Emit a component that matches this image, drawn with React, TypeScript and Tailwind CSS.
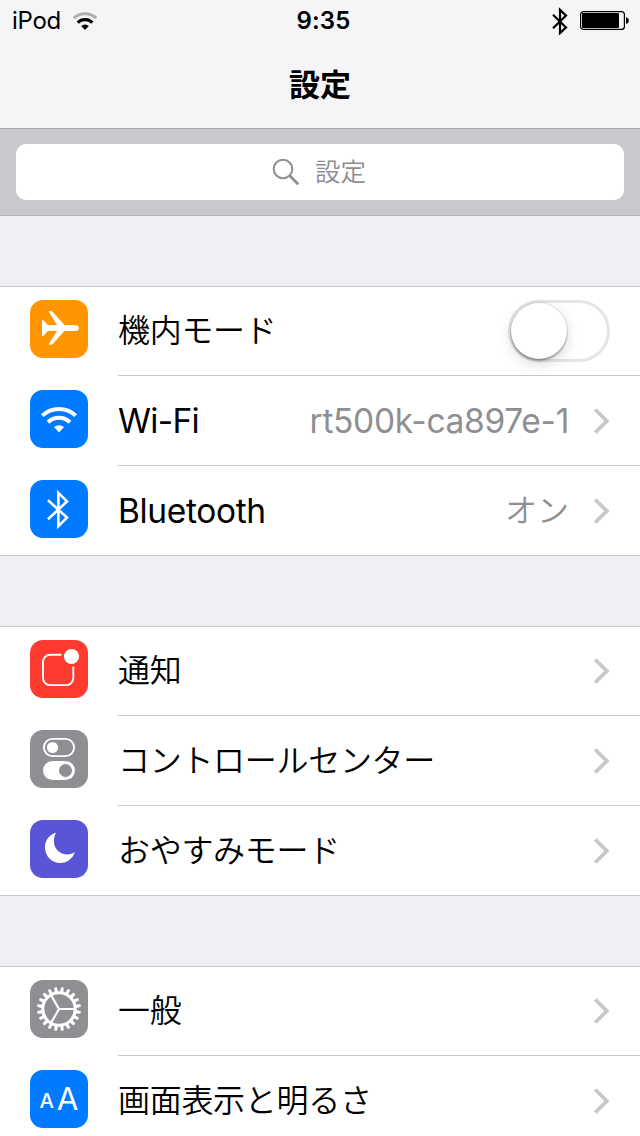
import type { ReactNode } from "react";
import { clsx } from "clsx";

type RowProps = {
  icon: ReactNode;
  iconClassName: string;
  label: string;
  labelClassName?: string;
  last?: boolean;
  children?: ReactNode;
};

function Row({
  icon,
  iconClassName,
  label,
  labelClassName = "font-[350] tracking-[-0.3px]",
  last,
  children,
}: RowProps) {
  return (
    <div className="flex h-[90px] pl-[30px]">
      <div
        className={clsx(
          "mt-[14px] size-[58px] shrink-0 overflow-hidden rounded-[13px]",
          iconClassName,
        )}
      >
        {icon}
      </div>
      <div
        className={clsx(
          "ml-[30px] flex flex-1 items-center border-b pr-[30px]",
          last ? "border-transparent" : "border-[#c8c7cc]",
        )}
      >
        <span className={clsx("flex-1 whitespace-nowrap", labelClassName)}>
          {label}
        </span>
        {children}
      </div>
    </div>
  );
}

function Group({ children }: { children: ReactNode }) {
  return (
    <section className="mb-[70px] bg-white shadow-[inset_0_1px_0_#c8c7cc,inset_0_-1px_0_#c8c7cc]">
      {children}
    </section>
  );
}

function Chevron() {
  return (
    <svg width="18" height="28" viewBox="0 0 18 28" className="ml-[23px]">
      <path
        d="M3.200 2.500 14.800 14 3.200 25.500"
        fill="none"
        stroke="#c7c7cc"
        strokeWidth="3.800"
      />
    </svg>
  );
}

function Switch() {
  return (
    <div className="mt-px h-[62px] w-[102px] rounded-full border-[3px] border-[#e5e5e5]">
      <div className="size-14 rounded-full bg-white shadow-[0_0_0_1px_rgba(0,0,0,0.08),0_2px_2px_rgba(0,0,0,0.3),0_5px_14px_rgba(0,0,0,0.15)]" />
    </div>
  );
}

function AirplaneIcon() {
  return (
    <svg viewBox="0 0 58 58" fill="#fff">
      <path d="M12 20.200h1.400l4.300 4.900h9.300L19 12.300c-.4-.8-.2-1.300.6-1.300h2.200L34.500 25l11.500.2c4 .1 3.900 5.600 0 5.700L34.500 31 21.900 44.800h-2.300c-.8 0-1-.5-.6-1.300L27 31h-9.300l-4.300 4.900H12z" />
    </svg>
  );
}

function WifiIcon() {
  return (
    <svg viewBox="0 0 58 58" fill="none" stroke="#fff">
      <path d="M12.300 25.600a24.100 24.100 0 0 1 33.400 0" strokeWidth="4" />
      <path d="M18 32.200a15.800 15.800 0 0 1 22 0" strokeWidth="4" />
      <path
        d="M24 37.100a7.400 7.400 0 0 1 10 0L29 42.600z"
        fill="#fff"
        stroke="none"
      />
    </svg>
  );
}

function BluetoothIcon() {
  return (
    <svg viewBox="0 0 58 58" fill="none" stroke="#fff" strokeWidth="2.600">
      <path d="M18 20.300 37 37.600 28.400 46.100V12.900L37 21.400 18 39.200" />
    </svg>
  );
}

function NotificationIcon() {
  return (
    <svg viewBox="0 0 58 58" fill="none">
      <path
        d="M31.500 14.800H20a7 7 0 0 0-7 7v16.300a7 7 0 0 0 7 7h16.300a7 7 0 0 0 7-7V26.500"
        stroke="#fff"
        strokeWidth="1.900"
      />
      <circle cx="41.500" cy="16.500" r="7.600" fill="#fff" />
    </svg>
  );
}

function ControlCenterIcon() {
  return (
    <svg viewBox="0 0 58 58" fill="none">
      <rect
        x="13.900"
        y="8.900"
        width="30.200"
        height="17.200"
        rx="8.600"
        stroke="#fff"
        strokeWidth="1.900"
      />
      <circle cx="22.500" cy="17.500" r="5.600" fill="#fff" />
      <rect x="13" y="31" width="32" height="19" rx="9.500" fill="#fff" />
      <circle cx="35.500" cy="40.500" r="6.500" fill="#8e8e93" />
    </svg>
  );
}

function MoonIcon() {
  return (
    <svg viewBox="0 0 58 58" fill="#fff">
      <path d="M26 12.800C19.500 14.500 15 20.300 15 27.500 15 36.200 21.800 43 30.400 43c6.600 0 12.400-4.300 14.600-10.900-2.100 1.500-4.700 2.300-7.500 2.300-7.700 0-13.600-5.600-13.600-13.200 0-3 .8-6.100 2.100-8.400z" />
    </svg>
  );
}

const GEAR_TEETH = Array.from({ length: 20 }, (_, i) => i * 18 + 9);

function GearIcon() {
  return (
    <svg viewBox="0 0 58 58" fill="none" stroke="#fff">
      <circle cx="29" cy="29" r="16.200" strokeWidth="3" />
      {GEAR_TEETH.map((angle) => (
        <path
          key={angle}
          d="M27.200 12.200 27.700 7.100h2.600L30.800 12.200z"
          fill="#fff"
          stroke="none"
          transform={`rotate(${angle} 29 29)`}
        />
      ))}
      <path
        d="M29 29h15.500M29 29l-7.700-13.400M29 29l-7.700 13.400"
        strokeWidth="2.200"
      />
    </svg>
  );
}

function TextSizeIcon() {
  return (
    <div className="flex items-baseline justify-center pt-[5px] font-['Inter'] leading-[48px] text-white">
      <span className="relative -top-[2.500px] text-[20.500px] font-medium">
        A
      </span>
      <span className="ml-[2.500px] text-[31.500px]">A</span>
    </div>
  );
}

function StatusBar() {
  return (
    <div className="grid h-10 grid-cols-3 items-center pr-[11px] pl-3 text-[24px] leading-10">
      <div className="flex items-center">
        <span className="tracking-[-0.3px]">iPod</span>
        <svg
          width="26"
          height="20"
          viewBox="0 0 26 20"
          fill="none"
          className="ml-[11px]"
        >
          <path
            d="M1.700 7.200a16.300 16.300 0 0 1 22.600 0"
            stroke="#b0b0b3"
            strokeWidth="3"
          />
          <path
            d="M5.700 11.600a10.600 10.600 0 0 1 14.600 0"
            stroke="#000"
            strokeWidth="3.200"
          />
          <path d="M9.200 15a5.500 5.500 0 0 1 7.600 0L13 19.100z" fill="#000" />
        </svg>
      </div>
      <div className="pt-px pl-[6px] text-center font-semibold tracking-[0.2px]">
        9:35
      </div>
      <div className="flex items-center justify-end">
        <svg
          width="16"
          height="28"
          viewBox="0 0 16 28"
          fill="none"
          stroke="#000"
          strokeWidth="2.200"
        >
          <path d="M1 7.800 14 20.400 8 26.100V2.900L14 8.600 1 21.200" />
        </svg>
        <svg width="49" height="19" viewBox="0 0 49 19" className="ml-3">
          <rect
            x=".6"
            y=".6"
            width="43.800"
            height="17.800"
            rx="3"
            fill="none"
            stroke="#000"
            strokeWidth="1.200"
          />
          <rect x="2" y="2" width="37" height="15" rx="1" />
          <path d="M46 6.200c3.800.5 3.800 6.100 0 6.600z" />
        </svg>
      </div>
    </div>
  );
}

export default function App() {
  return (
    <div className="h-[1136px] w-[640px] overflow-hidden bg-[#efeff4] font-['Inter','Noto_Sans_CJK_JP',sans-serif] text-[32px] text-black">
      <header className="h-[129px] border-b border-[#a9a9ad] bg-[#f5f5f7]">
        <StatusBar />
        <h1 className="pt-px text-center text-[31px] leading-[88px] font-bold">
          設定
        </h1>
      </header>

      <div className="mb-[70px] h-[87px] border-b border-[#b4b4b9] bg-[#c9c8ce] px-4 pt-[15px]">
        <div className="flex h-14 items-center justify-center rounded-[10px] bg-white pr-[2px] text-[25.500px] font-[350] text-[#8e8e93]">
          <svg
            width="28"
            height="28"
            viewBox="0 0 28 28"
            fill="none"
            stroke="#8e8e93"
            className="mr-[15px]"
          >
            <circle cx="11" cy="11" r="9.300" strokeWidth="2" />
            <path d="m17.500 17.500 8.700 8.700" strokeWidth="2.800" />
          </svg>
          設定
        </div>
      </div>

      <Group>
        <Row
          icon={<AirplaneIcon />}
          iconClassName="bg-[#ff9500]"
          label="機内モード"
        >
          <Switch />
        </Row>
        <Row
          icon={<WifiIcon />}
          iconClassName="bg-[#007aff]"
          label="Wi-Fi"
          labelClassName="pt-[2px] text-[33.500px] tracking-[-0.7px]"
        >
          <span className="pt-[2px] text-[33.500px] tracking-[-0.3px] text-[#8e8e93]">
            rt500k-ca897e-1
          </span>
          <Chevron />
        </Row>
        <Row
          icon={<BluetoothIcon />}
          iconClassName="bg-[#007aff]"
          label="Bluetooth"
          labelClassName="pt-[2px] text-[33.500px] tracking-[-0.35px]"
          last
        >
          <span className="font-[350] text-[#8e8e93]">オン</span>
          <Chevron />
        </Row>
      </Group>

      <Group>
        <Row
          icon={<NotificationIcon />}
          iconClassName="bg-[#ff3b30]"
          label="通知"
        >
          <Chevron />
        </Row>
        <Row
          icon={<ControlCenterIcon />}
          iconClassName="bg-[#8e8e93]"
          label="コントロールセンター"
        >
          <Chevron />
        </Row>
        <Row
          icon={<MoonIcon />}
          iconClassName="bg-[#5856d6]"
          label="おやすみモード"
          last
        >
          <Chevron />
        </Row>
      </Group>

      <Group>
        <Row icon={<GearIcon />} iconClassName="bg-[#8e8e93]" label="一般">
          <Chevron />
        </Row>
        <Row
          icon={<TextSizeIcon />}
          iconClassName="bg-[#007aff]"
          label="画面表示と明るさ"
        >
          <Chevron />
        </Row>
      </Group>
    </div>
  );
}
